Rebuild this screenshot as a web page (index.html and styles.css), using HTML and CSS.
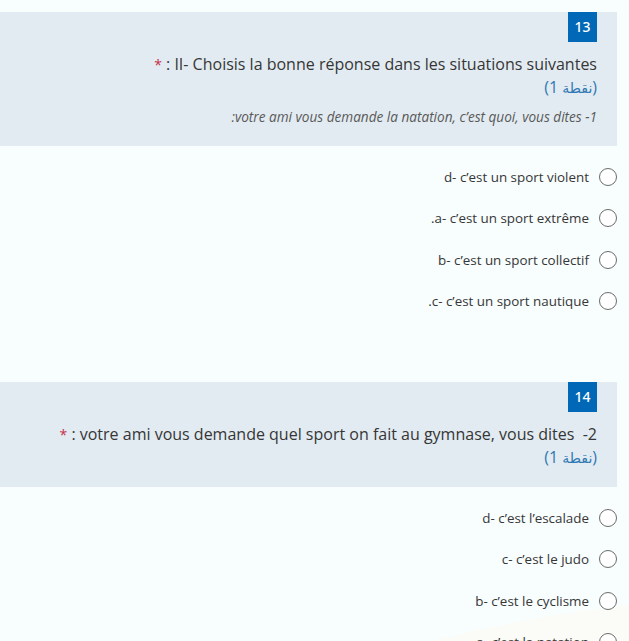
FILE: index.html
```html
<!DOCTYPE html>
<html lang="fr">
<head>
    <meta charset="UTF-8">
    <meta name="viewport" content="width=device-width, initial-scale=1.0">
    <title>Quiz</title>
    <link rel="stylesheet" href="styles.css">
</head>
<body>

    <div class="page">
        <div class="backdrop"></div>

        <div class="form">

            <div class="question">
                <div class="question-head">
                    <span class="number">13</span>
                    <div class="title"><span class="required">*</span> : II- Choisis la bonne réponse dans les situations suivantes</div>
                    <div class="points">(1 <bdi>نقطة</bdi>)</div>
                    <div class="subtitle">:votre ami vous demande la natation, c’est quoi, vous dites -1</div>
                </div>
                <div class="choices">
                    <label class="choice"><span class="choice-text">d- c’est un sport violent</span><input type="radio" name="q13"><span class="radio"></span></label>
                    <label class="choice"><span class="choice-text">.a- c’est un sport extrême</span><input type="radio" name="q13"><span class="radio"></span></label>
                    <label class="choice"><span class="choice-text">b- c’est un sport collectif</span><input type="radio" name="q13"><span class="radio"></span></label>
                    <label class="choice"><span class="choice-text">.c- c’est un sport nautique</span><input type="radio" name="q13"><span class="radio"></span></label>
                </div>
            </div>

            <div class="question">
                <div class="question-head">
                    <span class="number">14</span>
                    <div class="title"><span class="required">*</span> : votre ami vous demande quel sport on fait au gymnase, vous dites &nbsp;-2</div>
                    <div class="points">(1 <bdi>نقطة</bdi>)</div>
                </div>
                <div class="choices">
                    <label class="choice"><span class="choice-text">d- c’est l’escalade</span><input type="radio" name="q14"><span class="radio"></span></label>
                    <label class="choice"><span class="choice-text">c- c’est le judo</span><input type="radio" name="q14"><span class="radio"></span></label>
                    <label class="choice"><span class="choice-text">b- c’est le cyclisme</span><input type="radio" name="q14"><span class="radio"></span></label>
                    <label class="choice"><span class="choice-text">a- c’est la natation</span><input type="radio" name="q14"><span class="radio"></span></label>
                </div>
            </div>

        </div>
    </div>

</body>
</html>
```

FILE: styles.css
```css
:root {
    --bg-color: #f8fdfe;
    --head-bg: #e2ebf1;
    --badge-bg: #0068b6;
    --text-color: #363636;
    --muted-color: #595959;
    --points-color: #2f78b4;
    --required-color: #c4314b;
    --radio-border: #6b6b6b;
}

* {
    margin: 0;
    padding: 0;
    box-sizing: border-box;
}

body {
    font-family: "Open Sans", "DejaVu Sans", sans-serif;
    background-color: var(--bg-color);
    color: var(--text-color);
}

.page {
    position: relative;
    height: 100vh;
    overflow: hidden;
}

.backdrop {
    position: absolute;
    left: 110px;
    top: 604px;
    width: 1100px;
    height: 500px;
    border-radius: 50%;
    background-color: #fbfcf7;
    transform: rotate(-5deg);
}

.form {
    position: relative;
    padding-top: 12px;
    margin-right: 12px;
}

.question {
    margin-bottom: 60px;
}

.question-head {
    background-color: var(--head-bg);
    padding: 0 20px 20px 20px;
    display: flex;
    flex-direction: column;
    align-items: flex-end;
    text-align: right;
}

.number {
    background-color: var(--badge-bg);
    color: #ffffff;
    width: 29px;
    height: 30px;
    line-height: 30px;
    text-align: center;
    font-size: 14px;
    font-family: "Noto Sans", sans-serif;
    font-weight: 500;
    margin-bottom: 11px;
}

.title {
    font-size: 16px;
    line-height: 22px;
}

.required {
    color: var(--required-color);
    font-size: 14px;
}

.points {
    font-size: 16px;
    height: 22px;
    line-height: 22px;
    color: var(--points-color);
}

.points bdi {
    font-family: "DejaVu Sans", sans-serif;
    font-size: 14px;
    line-height: 1;
}

.subtitle {
    font-size: 13.6px;
    font-style: italic;
    color: var(--muted-color);
    line-height: 18px;
    margin-top: 10px;
}

.question:last-child .question-head {
    padding-bottom: 19px;
}

.choices {
    display: flex;
    flex-direction: column;
    padding-top: 10px;
}

.choice {
    display: flex;
    justify-content: flex-end;
    align-items: center;
    gap: 10px;
    height: 41.5px;
    font-size: 13.4px;
    cursor: pointer;
}

.choice input {
    display: none;
}

.radio {
    width: 18px;
    height: 18px;
    border: 1px solid var(--radio-border);
    border-radius: 50%;
    background-color: #ffffff;
}

.choice input:checked + .radio {
    border: 5px solid var(--badge-bg);
}
```
